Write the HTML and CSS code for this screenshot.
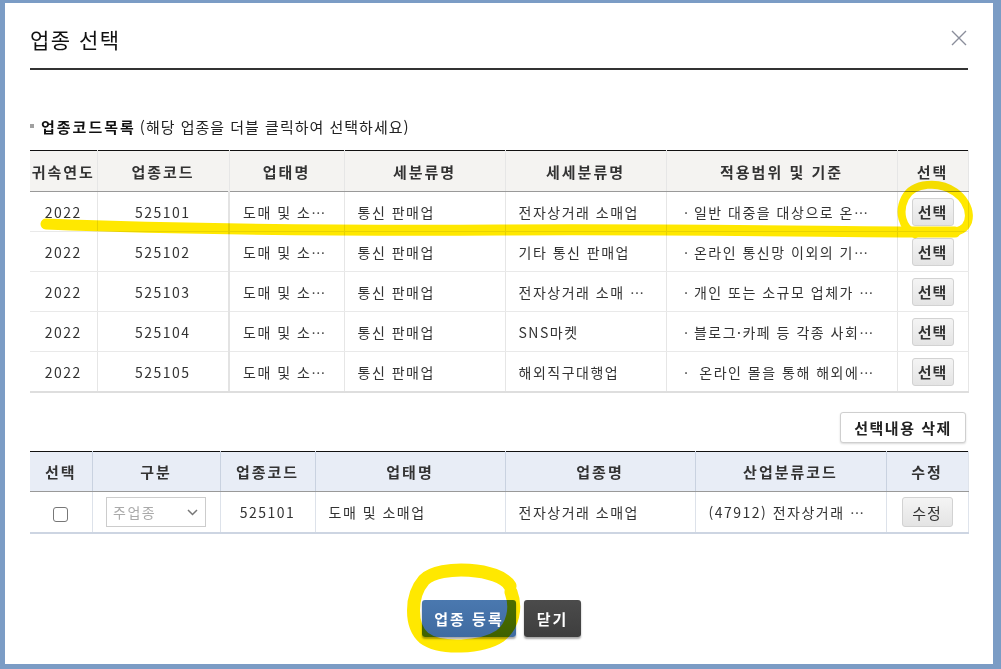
FILE: index.html
```html
<!DOCTYPE html>
<html lang="ko">
<head>
    <meta charset="UTF-8">
    <meta name="viewport" content="width=device-width, initial-scale=1.0">
    <title>업종 선택</title>
    <link rel="stylesheet" href="styles.css">
</head>
<body>
    <div class="screen">
        <div class="modal">
            <div class="modal-head">
                <h2 class="modal-title">업종 선택</h2>
                <button class="close" type="button" aria-label="닫기">
                    <svg width="16" height="16" viewBox="0 0 16 16">
                        <path d="M1 1 L15 15 M15 1 L1 15" stroke="#8a8e9b" stroke-width="1.4" fill="none"/>
                    </svg>
                </button>
            </div>

            <p class="section-label">
                <span class="bullet"></span><strong>업종코드목록</strong>
                <span class="hint">(해당 업종을 더블 클릭하여 선택하세요)</span>
            </p>

            <table class="grid code-list">
                <colgroup>
                    <col style="width:67px"><col style="width:132px"><col style="width:115px">
                    <col style="width:161px"><col style="width:161px"><col style="width:231px"><col style="width:71px">
                </colgroup>
                <thead>
                    <tr>
                        <th>귀속연도</th><th>업종코드</th><th>업태명</th><th>세분류명</th>
                        <th>세세분류명</th><th>적용범위 및 기준</th><th>선택</th>
                    </tr>
                </thead>
                <tbody>
                    <tr>
                        <td>2022</td><td>525101</td><td class="l">도매 및 소⋯</td><td class="l">통신 판매업</td>
                        <td class="l">전자상거래 소매업</td><td class="l">ㆍ일반 대중을 대상으로 온⋯</td>
                        <td><button class="btn-pick" type="button">선택</button></td>
                    </tr>
                    <tr>
                        <td>2022</td><td>525102</td><td class="l">도매 및 소⋯</td><td class="l">통신 판매업</td>
                        <td class="l">기타 통신 판매업</td><td class="l">ㆍ온라인 통신망 이외의 기⋯</td>
                        <td><button class="btn-pick" type="button">선택</button></td>
                    </tr>
                    <tr>
                        <td>2022</td><td>525103</td><td class="l">도매 및 소⋯</td><td class="l">통신 판매업</td>
                        <td class="l">전자상거래 소매 ⋯</td><td class="l">ㆍ개인 또는 소규모 업체가 ⋯</td>
                        <td><button class="btn-pick" type="button">선택</button></td>
                    </tr>
                    <tr>
                        <td>2022</td><td>525104</td><td class="l">도매 및 소⋯</td><td class="l">통신 판매업</td>
                        <td class="l">SNS마켓</td><td class="l">ㆍ블로그·카페 등 각종 사회⋯</td>
                        <td><button class="btn-pick" type="button">선택</button></td>
                    </tr>
                    <tr>
                        <td>2022</td><td>525105</td><td class="l">도매 및 소⋯</td><td class="l">통신 판매업</td>
                        <td class="l">해외직구대행업</td><td class="l">ㆍ 온라인 몰을 통해 해외에⋯</td>
                        <td><button class="btn-pick" type="button">선택</button></td>
                    </tr>
                </tbody>
            </table>

            <div class="toolbar">
                <button class="btn-white" type="button">선택내용 삭제</button>
            </div>

            <table class="grid picked">
                <colgroup>
                    <col style="width:62px"><col style="width:128px"><col style="width:95px">
                    <col style="width:190px"><col style="width:190px"><col style="width:191px"><col style="width:82px">
                </colgroup>
                <thead>
                    <tr>
                        <th>선택</th><th>구분</th><th>업종코드</th><th>업태명</th>
                        <th>업종명</th><th>산업분류코드</th><th>수정</th>
                    </tr>
                </thead>
                <tbody>
                    <tr>
                        <td><span class="check"></span></td>
                        <td>
                            <div class="select">
                                <span>주업종</span>
                                <svg width="11" height="7" viewBox="0 0 11 7">
                                    <path d="M1 1 L5.5 5.5 L10 1" stroke="#777" stroke-width="1.5" fill="none"/>
                                </svg>
                            </div>
                        </td>
                        <td>525101</td>
                        <td class="l">도매 및 소매업</td>
                        <td class="l">전자상거래 소매업</td>
                        <td class="l">(47912) 전자상거래 ⋯</td>
                        <td><button class="btn-pick btn-edit" type="button">수정</button></td>
                    </tr>
                </tbody>
            </table>

            <div class="actions">
                <button class="btn-blue" type="button">업종 등록</button>
                <button class="btn-dark" type="button">닫기</button>
            </div>
        </div>

        <!-- 형광펜 표시 -->
        <svg class="marks" width="1001" height="669" viewBox="0 0 1001 669">
            <g fill="none" stroke="#ffe800" stroke-linecap="round" stroke-linejoin="round">
                <path d="M46 224 C150 228 300 231 500 230 C700 229 850 232 955 232" stroke-width="11"/>
                <path d="M955 232 C975 228 972 204 955 192 C940 181 913 182 905 198 C898 212 902 228 915 234" stroke-width="8"/>
                <path d="M510 586 C500 568 440 564 424 580 C410 596 410 626 424 638 C440 650 482 648 500 636 C513 626 517 608 511 592" stroke-width="13"/>
            </g>
        </svg>
    </div>
</body>
</html>
```

FILE: styles.css
```css
body {
    margin: 0;
    overflow: hidden;
    font-family: "Noto Sans CJK KR", "Noto Sans", sans-serif;
    color: #333;
}
.screen {
    position: relative;
    width: 1001px;
    height: 669px;
    box-sizing: border-box;
    padding: 3px 8px 5px 5px;
    background-color: #7b9cc5;
}
.modal {
    height: 661px;
    box-sizing: border-box;
    padding: 0 25px;
    background: #fff;
}
.modal-head {
    display: flex;
    justify-content: space-between;
    align-items: center;
    padding: 22px 1px 15px 0;
    border-bottom: 2px solid #333;
}
.modal-title {
    margin: 0;
    font-size: 21px;
    line-height: 28px;
    font-weight: normal;
    color: #111;
    letter-spacing: 1.5px;
}
.close {
    border: 0;
    padding: 0;
    background: none;
    width: 16px;
    height: 16px;
    margin-top: -3px;
}
.close svg {
    display: block;
}
.section-label {
    display: flex;
    align-items: center;
    margin: 46px 0 14px;
    height: 20px;
    font-size: 15px;
    color: #111;
}
.bullet {
    width: 4px;
    height: 4px;
    background: #a0a0a0;
    margin-right: 7px;
}
.section-label strong {
    letter-spacing: 2px;
    margin-right: 4px;
}
.hint {
    font-size: 15px;
    letter-spacing: 1px;
    color: #222;
}

/* 표 공통 */
.grid {
    width: 100%;
    border-collapse: collapse;
    table-layout: fixed;
    font-size: 14px;
    letter-spacing: 1.5px;
    color: #333;
}
.grid th {
    height: 40px;
    padding: 0;
    font-size: 15px;
    font-weight: bold;
    letter-spacing: 2px;
    color: #333;
    border-bottom: 1px solid #999;
}
.grid td {
    height: 39px;
    padding: 0;
    text-align: center;
    white-space: nowrap;
    overflow: hidden;
}
.grid td.l {
    text-align: left;
    padding-left: 13px;
}
.grid th + th,
.grid td + td {
    border-left: 1px solid #e6e6e6;
}

.code-list {
    border-top: 1px solid #111;
    border-right: 1px solid #e6e6e6;
}
.code-list th {
    background: #f4f3f1;
}
.code-list td {
    border-bottom: 1px solid #e9e9e9;
}
.code-list tr:last-child td {
    border-bottom: 2px solid #dedede;
}
.code-list td:nth-child(3) {
    border-left: 2px solid #e3e3e3;
}

.picked {
    border-top: 1px solid #111;
    border-right: 1px solid #dfe4ec;
}
.picked th {
    height: 39px;
    background: #e8edf6;
}
.picked th + th {
    border-left: 1px solid #c9d2e0;
}
.picked td {
    height: 40px;
    border-bottom: 2px solid #cdd5e2;
}
.picked td + td {
    border-left: 1px solid #dde2ea;
}

/* 버튼 */
.btn-pick {
    width: 42px;
    height: 28px;
    padding: 0;
    font-family: inherit;
    font-size: 15px;
    font-weight: bold;
    letter-spacing: 1px;
    color: #333;
    border: 1px solid #d2d2d2;
    border-radius: 3px;
    background: linear-gradient(#f4f4f4, #e4e4e4);
}
.btn-edit {
    width: 51px;
    height: 30px;
    font-weight: normal;
}
.toolbar {
    display: flex;
    justify-content: flex-end;
    margin: 19px 2px 8px 0;
}
.btn-white {
    width: 126px;
    height: 31px;
    padding: 0;
    font-family: inherit;
    font-size: 15px;
    font-weight: bold;
    letter-spacing: 1.5px;
    color: #222;
    background: #fff;
    border: 1px solid #cfcfcf;
    border-radius: 3px;
    box-shadow: 0 1px 2px rgba(0, 0, 0, 0.15);
}
.check {
    display: inline-block;
    width: 13px;
    height: 13px;
    border: 1px solid #777;
    border-radius: 3px;
    vertical-align: middle;
}
.select {
    display: flex;
    justify-content: space-between;
    align-items: center;
    width: 100px;
    height: 30px;
    box-sizing: border-box;
    margin: 0 auto;
    padding: 0 7px 0 6px;
    border: 1px solid #ccc;
    color: #aaa;
    font-size: 14px;
}
.actions {
    display: flex;
    justify-content: center;
    gap: 8px;
    margin-top: 66px;
    padding-left: 5px;
}
.btn-blue,
.btn-dark {
    height: 37px;
    padding: 0;
    font-family: inherit;
    font-size: 15px;
    font-weight: bold;
    letter-spacing: 2px;
    color: #fff;
    border: 0;
    border-radius: 3px;
    box-shadow: 0 2px 2px rgba(0, 0, 0, 0.35);
}
.btn-blue {
    width: 94px;
    background: linear-gradient(#4a78af, #3f6ba1);
}
.btn-dark {
    width: 57px;
    background: linear-gradient(#4b4b4b, #3e3e3e);
}
.marks {
    position: absolute;
    top: 0;
    left: 0;
    pointer-events: none;
    mix-blend-mode: multiply;
}
```
